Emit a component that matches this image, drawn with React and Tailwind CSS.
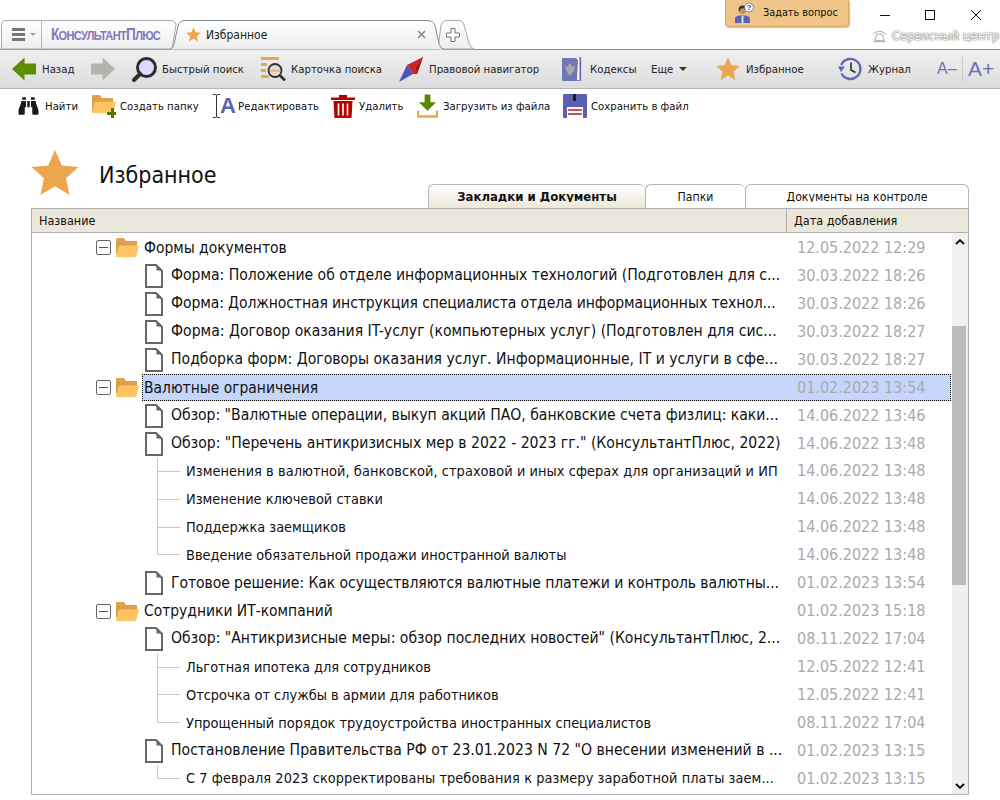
import React from 'react';
import { FaBinoculars } from 'react-icons/fa';

const rows = [
  { type: 'folder', text: 'Формы документов', date: '12.05.2022 12:29' },
  { type: 'doc', text: 'Форма: Положение об отделе информационных технологий (Подготовлен для с...', date: '30.03.2022 18:26', track: 'tracking-[-0.04px]' },
  { type: 'doc', text: 'Форма: Должностная инструкция специалиста отдела информационных технол...', date: '30.03.2022 18:26', track: 'tracking-[-0.12px]' },
  { type: 'doc', text: 'Форма: Договор оказания IT-услуг (компьютерных услуг) (Подготовлен для сис...', date: '30.03.2022 18:27' },
  { type: 'doc', text: 'Подборка форм: Договоры оказания услуг. Информационные, IT и услуги в сфе...', date: '30.03.2022 18:27' },
  { type: 'folder', text: 'Валютные ограничения', date: '01.02.2023 13:54', selected: true },
  { type: 'doc', text: 'Обзор: "Валютные операции, выкуп акций ПАО, банковские счета физлиц: каки...', date: '14.06.2022 13:46', track: 'tracking-[-0.03px]' },
  { type: 'doc', text: 'Обзор: "Перечень антикризисных мер в 2022 - 2023 гг." (КонсультантПлюс, 2022)', date: '14.06.2022 13:48' },
  { type: 'sub', text: 'Изменения в валютной, банковской, страховой и иных сферах для организаций и ИП', date: '14.06.2022 13:48', track: 'tracking-[0.06px]' },
  { type: 'sub', text: 'Изменение ключевой ставки', date: '14.06.2022 13:48' },
  { type: 'sub', text: 'Поддержка заемщиков', date: '14.06.2022 13:48' },
  { type: 'sub', text: 'Введение обязательной продажи иностранной валюты', date: '14.06.2022 13:48', last: true },
  { type: 'doc', text: 'Готовое решение: Как осуществляются валютные платежи и контроль валютны...', date: '01.02.2023 13:54', track: 'tracking-[-0.09px]' },
  { type: 'folder', text: 'Сотрудники ИТ-компаний', date: '01.02.2023 15:18' },
  { type: 'doc', text: 'Обзор: "Антикризисные меры: обзор последних новостей" (КонсультантПлюс, 2...', date: '08.11.2022 17:04' },
  { type: 'sub', text: 'Льготная ипотека для сотрудников', date: '12.05.2022 12:41' },
  { type: 'sub', text: 'Отсрочка от службы в армии для работников', date: '12.05.2022 12:41' },
  { type: 'sub', text: 'Упрощенный порядок трудоустройства иностранных специалистов', date: '08.11.2022 17:04', last: true },
  { type: 'doc', text: 'Постановление Правительства РФ от 23.01.2023 N 72 "О внесении изменений в ...', date: '01.02.2023 13:15' },
  { type: 'sub', text: 'С 7 февраля 2023 скорректированы требования к размеру заработной платы заем...', date: '01.02.2023 13:15', last: true, track: 'tracking-[0.07px]' },
];

const STAR = '12,0.5 15.4,8.2 23.8,9 17.5,14.6 19.3,23 12,18.6 4.7,23 6.5,14.6 0.2,9 8.6,8.2';

function Star({ className }) {
  return (
    <svg viewBox="0 0 24 24" className={className}>
      <polygon points={STAR} fill="#eda64d" />
    </svg>
  );
}

function TabShapes() {
  return (
    <svg width="480" height="31" viewBox="0 0 480 31" className="absolute left-0 top-[19px]">
      <defs>
        <linearGradient id="tabg" x1="0" y1="0" x2="0" y2="1">
          <stop offset="0" stopColor="#ffffff" />
          <stop offset="1" stopColor="#eeeeee" />
        </linearGradient>
      </defs>
      <path d="M438 30 L441 6 Q442 1.5 447 1.5 L458 1.5 Q463 1.5 464 6 L469 24 Q470.5 29 474 30 Z" fill="url(#tabg)" stroke="#a3abb3" />
      <path d="M1.5 30 L1.5 6 Q1.5 1.5 6 1.5 L170 1.5 Q176 1.5 176 6 L172 30 Z" fill="url(#tabg)" stroke="#a3abb3" />
      <line x1="41.5" y1="2" x2="41.5" y2="30" stroke="#b5bbc0" />
      <path d="M170 30.5 Q173 29.5 174 25 L178 7 Q179.5 1.5 185 1.5 L428 1.5 Q433 1.5 435 6 L439 25 Q440.5 29.5 444 30.5" fill="url(#tabg)" stroke="#838c94" />
    </svg>
  );
}

function AskIcon() {
  return (
    <svg viewBox="0 0 20 22" className="w-[20px] h-[22px] shrink-0">
      <path d="M1 21 V17 Q1 14 5 13.5 L12 13.5 Q16 14 16 17 V21 Z" fill="#5d63b4" />
      <rect x="7.6" y="14" width="1.8" height="7" fill="#e8e8f4" />
      <circle cx="8.5" cy="8.5" r="3.6" fill="#c98f63" />
      <path d="M4.6 8.5 Q4.5 3.6 8.5 3.6 Q12 3.6 12.4 7 Q9 5.6 6.5 7 L5.5 9.5 Z" fill="#333" />
      <circle cx="15" cy="5.5" r="4.4" fill="#fff" stroke="#5d63b4" strokeWidth="0.8" />
      <text x="15" y="8.3" textAnchor="middle" fontSize="7.5" fontWeight="700" fill="#444" fontFamily="Liberation Sans">?</text>
    </svg>
  );
}

function ToolIcon({ name }) {
  if (name === 'back') {
    return (
      <svg viewBox="0 0 24 24" className="w-[24px] h-[24px] shrink-0">
        <path d="M0 12 L12.5 0.5 V6.5 H24 V17.5 H12.5 V23.5 Z" fill="#5c8c00" />
      </svg>
    );
  }
  if (name === 'forward') {
    return (
      <svg viewBox="0 0 24 24" className="w-[24px] h-[24px] shrink-0">
        <path d="M24 12 L11.5 0.5 V6.5 H0 V17.5 H11.5 V23.5 Z" fill="#b4b3ae" />
      </svg>
    );
  }
  if (name === 'search') {
    return (
      <svg viewBox="0 0 25 25" className="w-[25px] h-[25px] shrink-0">
        <circle cx="14.5" cy="10.5" r="9" fill="#dcdcff" stroke="#2e2e2e" strokeWidth="3" />
        <path d="M8 17 L2 23" stroke="#2e2e2e" strokeWidth="4" strokeLinecap="round" />
      </svg>
    );
  }
  if (name === 'card') {
    return (
      <svg viewBox="0 0 25 24" className="w-[25px] h-[24px] shrink-0">
        <path d="M0 1.5 H18 M0 7.5 H6 M0 13.5 H5 M0 19.5 H8" stroke="#eba64c" strokeWidth="3" />
        <circle cx="14" cy="13.5" r="6.5" fill="#e4dcdc" stroke="#2e2e2e" strokeWidth="1.8" />
        <path d="M9 12.5 H19 V15 H9 Z" fill="#eba64c" opacity="0.6" />
        <path d="M19 18.5 L24 23.5" stroke="#2e2e2e" strokeWidth="2.6" />
      </svg>
    );
  }
  if (name === 'nav') {
    return (
      <svg viewBox="0 0 24 25" className="w-[24px] h-[25px] shrink-0">
        <path d="M0 25 L8 8 L14 17 Z" fill="#4a55b8" />
        <path d="M8 8 L24 0 L18 17 L14 17 Z" fill="#c9262c" />
        <path d="M24 0 L17 11 L18 17 Z" fill="#8f1c20" />
      </svg>
    );
  }
  if (name === 'codex') {
    return (
      <svg viewBox="0 0 20 24" className="w-[20px] h-[24px] shrink-0">
        <rect x="0" y="1" width="17" height="23" rx="1" fill="#6f75b9" />
        <path d="M14 1 H19 V23 H15 L16 3 Z" fill="#fff" />
        <rect x="17.5" y="0" width="1.6" height="24" fill="#5c62ab" />
        <path d="M3 8 L5 10 L8 6 L11 10 L13 8 L12 14 L8 19 L4 14 Z" fill="#a8a4aa" />
      </svg>
    );
  }
  if (name === 'star') return <Star className="w-[24px] h-[24px] shrink-0" />;
  if (name === 'clock') {
    return (
      <svg viewBox="0 0 24 24" className="w-[24px] h-[24px] shrink-0">
        <path d="M3.2 8 A10 10 0 1 1 3.5 16.5" fill="none" stroke="#6167b6" strokeWidth="2.4" />
        <path d="M0 9.5 L7 9.5 L3 15 Z" fill="#6167b6" />
        <path d="M13 5.5 V13 L17.5 15.5" fill="none" stroke="#2a2a2a" strokeWidth="1.6" />
      </svg>
    );
  }
  if (name === 'find') return <FaBinoculars className="w-[21px] h-[20px] shrink-0 text-[#1a1a1a]" />;
  if (name === 'folderAdd') {
    return (
      <svg viewBox="0 0 24 24" className="w-[24px] h-[24px] shrink-0">
        <path d="M0 2 Q0 1 1 1 H8 L10 4 H21 V19 H0 Z" fill="#dca24f" />
        <path d="M0 19 L3 8 H24 L21 19 Z" fill="#fdc562" />
        <path d="M15 18 H19 V14 H22 V18 H24 V21 H22 V24 H19 V21 H15 Z" fill="#4f7c00" />
      </svg>
    );
  }
  if (name === 'edit') {
    return (
      <span className="flex items-center w-[21px] h-[24px] shrink-0">
        <svg viewBox="0 0 9 24" className="w-[9px] h-[24px] shrink-0">
          <path d="M1 0.5 H3.5 Q4.5 0.5 4.5 2 V22 Q4.5 23.5 3.5 23.5 H1 M8 0.5 H5.5 Q4.5 0.5 4.5 2 M4.5 22 Q4.5 23.5 5.5 23.5 H8" fill="none" stroke="#333" />
        </svg>
        <span className="ml-[-1px] text-[22px] font-bold leading-none text-[#5d62b4] [font-family:'Liberation_Sans',sans-serif]">A</span>
      </span>
    );
  }
  if (name === 'trash') {
    return (
      <svg viewBox="0 0 24 24" className="w-[24px] h-[24px] shrink-0">
        <path d="M0 3.5 H24 V6 H0 Z M8 1 H16 V3.5 H8 Z" fill="#b90000" />
        <path d="M2.5 7 H21.5 L20.5 24 H3.5 Z" fill="#b90000" />
        <path d="M7.5 9.5 V21.5 M12 9.5 V21.5 M16.5 9.5 V21.5" stroke="#fff" strokeWidth="1.6" />
      </svg>
    );
  }
  if (name === 'download') {
    return (
      <svg viewBox="0 0 22 24" className="w-[21px] h-[24px] shrink-0">
        <path d="M8 0 H14 V8 H20 L11 17 L2 8 H8 Z" fill="#5a8600" />
        <path d="M1 17 V23 H21 V17" fill="none" stroke="#eba64c" strokeWidth="2.4" />
      </svg>
    );
  }
  return (
    <svg viewBox="0 0 24 24" className="w-[24px] h-[24px] shrink-0">
      <path d="M1 0 H23 Q24 0 24 1 V23 Q24 24 23 24 H1 Q0 24 0 23 V1 Q0 0 1 0 Z" fill="#5d5fb0" />
      <rect x="10" y="0" width="3" height="7" fill="#1e1e1e" />
      <rect x="4" y="13" width="16" height="11" fill="#fff" />
      <path d="M5 16 H19 M5 20 H19" stroke="#b41a24" strokeWidth="1.5" />
    </svg>
  );
}

function Tool({ icon, label, className }) {
  return (
    <div className={`flex items-center shrink-0 ${className}`}>
      <ToolIcon name={icon} />
      {label && <span className="whitespace-nowrap pt-[2px]">{label}</span>}
    </div>
  );
}

function Connector({ last }) {
  if (last) return <div className="w-[23px] h-1/2 self-start border-l border-b border-[#c8c8c8]" />;
  return (
    <div className="w-[23px] h-full flex items-center border-l border-[#c8c8c8]">
      <div className="w-full h-px bg-[#c8c8c8]" />
    </div>
  );
}

function Row({ row }) {
  let nameClass = 'text-[15.6px]';
  if (row.type === 'sub') nameClass = 'text-[14.4px] pt-[1px]';
  if (row.type === 'folder') nameClass = row.selected ? 'text-[15.45px] pl-[1px] pt-[1px]' : 'text-[15.45px] pl-[2px] pt-[1px]';
  return (
    <div className="h-[27.95px] flex items-center">
      {row.type === 'folder' && (
        <div className="flex items-center w-[110px] pl-[64px] shrink-0">
          <div className="w-[15px] h-[15px] flex items-center justify-center rounded-[2px] border border-[#666]">
            <div className="w-[9px] h-px bg-[#555]" />
          </div>
          <svg viewBox="0 0 23 19" className="w-[23px] h-[19px] ml-[5px] shrink-0">
            <path d="M0 1.5 Q0 0 1.5 0 H8 L10 3 H21 V16 H0 Z" fill="#dfa04d" />
            <path d="M0 19 L3 7.5 H23 L20 19 Z" fill="#fdc562" />
          </svg>
        </div>
      )}
      {row.type === 'doc' && (
        <div className="w-[139px] pl-[113px] shrink-0">
          <svg viewBox="0 0 18 24" className="w-[18px] h-[24px]">
            <path d="M1 1 H11 L17 7 V23 H1 Z" fill="#fff" stroke="#666" strokeWidth="2" />
            <path d="M11.5 0.5 L17.5 6.5 H11.5 Z" fill="#666" />
          </svg>
        </div>
      )}
      {row.type === 'sub' && (
        <div className="flex items-center h-full w-[154px] pl-[125px] shrink-0">
          <Connector last={row.last} />
        </div>
      )}
      <div className={`flex-1 min-w-0 flex items-center h-[27px] ${row.selected ? 'mr-[1px] border border-dotted border-black bg-[#c6d6fb]' : ''}`}>
        <div className={`flex-1 min-w-0 whitespace-nowrap overflow-hidden text-[#111] ${nameClass} ${row.track || ''}`}>
          {row.text}
        </div>
        <div className={`shrink-0 text-[16px] text-[#aaaaaa] whitespace-nowrap ${row.selected ? 'w-[153px]' : 'w-[155px]'}`}>{row.date}</div>
      </div>
    </div>
  );
}

export default function App() {
  return (
    <div className="w-[1000px] h-[800px] overflow-hidden bg-white flex flex-col text-[#222] [font-family:'DejaVu_Sans_Condensed','DejaVu_Sans',sans-serif]">
      {/* Title bar with browser-like tabs */}
      <div className="relative z-10 h-[49px] shrink-0 flex">
        <TabShapes />
        <div className="relative w-[725px] h-full pt-[20px] flex items-center">
          <div className="w-[41px] pl-[12px] flex items-center shrink-0">
            <div className="w-[13px] flex flex-col gap-[2.5px]">
              <div className="h-[2.5px] bg-[#777]" />
              <div className="h-[2.5px] bg-[#777]" />
              <div className="h-[2.5px] bg-[#777]" />
            </div>
            <div className="ml-[5px] w-0 h-0 border-x-[3px] border-x-transparent border-t-[3px] border-t-[#999]" />
          </div>
          <div className="w-[137px] pl-[10px] shrink-0 whitespace-nowrap">
            <div className="flex items-baseline origin-left scale-x-[0.85] font-bold tracking-[-0.8px] text-[#8079bb] [font-family:'Liberation_Sans',sans-serif]">
              <span className="text-[16px]">К</span>
              <span className="text-[13px]">ОНСУЛЬТАНТ</span>
              <span className="text-[16px]">П</span>
              <span className="text-[13px]">ЛЮС</span>
            </div>
          </div>
          <Star className="w-[15px] h-[15px] ml-[8px] shrink-0" />
          <span className="ml-[5px] pt-[1px] text-[12px] whitespace-nowrap">Избранное</span>
          <svg viewBox="0 0 9 9" className="w-[9px] h-[9px] ml-[150px] shrink-0">
            <path d="M1 1 L8 8 M8 1 L1 8" stroke="#888" strokeWidth="1.6" />
          </svg>
          <svg viewBox="0 0 14 14" className="w-[14px] h-[14px] ml-[20px] shrink-0">
            <path d="M5 0.5 H9 V5 H13.5 V9 H9 V13.5 H5 V9 H0.5 V5 H5 Z" fill="#fff" stroke="#777" />
          </svg>
        </div>
        <div className="w-[124px] h-[27px] shrink-0 flex items-center gap-[9px] pl-[8px] rounded-b-[4px] bg-[#eec587] border-x border-b border-[#d9aa63] shadow-[1px_1px_2px_#bbb] text-[10.8px] text-[#111]">
          <AskIcon />
          <span className="whitespace-nowrap">Задать вопрос</span>
        </div>
        <div className="flex-1 min-w-0 overflow-hidden flex flex-col">
          <div className="h-[26px] pt-[4px] flex items-center pl-[31px]">
            <div className="w-[10px] h-px bg-[#111]" />
            <div className="ml-[35px] w-[10px] h-[10px] border border-[#111]" />
            <svg viewBox="0 0 12 12" className="w-[12px] h-[12px] ml-[35px] shrink-0">
              <path d="M1 1 L11 11 M11 1 L1 11" stroke="#111" strokeWidth="1" />
            </svg>
          </div>
          <div className="flex items-center pl-[23px] gap-[5px] text-[12.8px] text-[#f4f4f4] whitespace-nowrap [text-shadow:0_0_2px_#666,0_0_1px_#888]">
            <svg viewBox="0 0 16 14" className="w-[15px] h-[14px] shrink-0">
              <path d="M1 5 Q8 -1 15 5 M2 13 H14 M5 5 H11 L13 12 H3 Z" fill="none" stroke="#a5a5a5" />
            </svg>
            <span>Сервисный центр</span>
          </div>
        </div>
      </div>

      {/* Main toolbar */}
      <div className="h-[40px] shrink-0 flex items-center border-t border-b border-t-[#868e96] border-b-[#b4b4b4] bg-gradient-to-b from-[#f0f0f0] to-[#dcdcdc] text-[11.3px]">
        <Tool icon="back" label="Назад" className="ml-[12px] gap-[6px] w-[79px]" />
        <Tool icon="forward" className="w-[41px]" />
        <Tool icon="search" label="Быстрый поиск" className="gap-[5px] w-[129px]" />
        <Tool icon="card" label="Карточка поиска" className="gap-[5px] w-[138px]" />
        <Tool icon="nav" label="Правовой навигатор" className="gap-[6px] w-[163px]" />
        <Tool icon="codex" label="Кодексы" className="gap-[8px] w-[89px]" />
        <div className="w-[65px] shrink-0 flex items-center gap-[6px]">
          <span className="pt-[2px]">Еще</span>
          <div className="w-0 h-0 border-x-[4px] border-x-transparent border-t-[4px] border-t-[#333]" />
        </div>
        <Tool icon="star" label="Избранное" className="gap-[6px] w-[122px]" />
        <Tool icon="clock" label="Журнал" className="gap-[6px] w-[99px]" />
        <span className="w-[25px] shrink-0 text-[16px] text-[#6d72b6] whitespace-nowrap [font-family:'Liberation_Sans',sans-serif]">A–</span>
        <div className="w-px h-[24px] bg-[#c8c8c8]" />
        <span className="ml-[5px] text-[21px] text-[#6d72b6] whitespace-nowrap [font-family:'Liberation_Sans',sans-serif]">A+</span>
      </div>

      {/* Action toolbar */}
      <div className="h-[34px] shrink-0 flex items-center text-[11.3px] text-[#111]">
        <Tool icon="find" label="Найти" className="ml-[18px] gap-[6px] w-[74px]" />
        <Tool icon="folderAdd" label="Создать папку" className="gap-[4px] w-[120px]" />
        <Tool icon="edit" label="Редактировать" className="gap-[5px] w-[119px]" />
        <Tool icon="trash" label="Удалить" className="gap-[4px] w-[86px]" />
        <Tool icon="download" label="Загрузить из файла" className="gap-[5px] w-[146px]" />
        <Tool icon="save" label="Сохранить в файл" className="gap-[4px]" />
      </div>

      {/* Title and tabs */}
      <div className="h-[85px] shrink-0 flex justify-between px-[31px]">
        <div className="flex items-center self-start mt-[26px] gap-[20px]">
          <Star className="w-[48px] h-[48px]" />
          <span className="pt-[4px] text-[23px] text-[#111] whitespace-nowrap">Избранное</span>
        </div>
        <div className="self-end flex h-[24px] text-[#111]">
          <div className="w-[217px] h-[24px] text-center text-[13px] font-bold rounded-t-[6px] border-l border-t border-[#b5b5b5] bg-gradient-to-b from-white to-[#ebe7da]">
            <div className="h-[17px] overflow-hidden leading-[24px]">Закладки и Документы</div>
          </div>
          <div className="w-[100px] h-[24px] text-center text-[12.2px] rounded-t-[6px] border-l border-t border-[#b5b5b5]">
            <div className="h-[17px] overflow-hidden leading-[24px]">Папки</div>
          </div>
          <div className="w-[224px] h-[24px] text-center text-[12.2px] rounded-t-[6px] border-x border-t border-[#b5b5b5]">
            <div className="h-[17px] overflow-hidden leading-[24px]">Документы на контроле</div>
          </div>
        </div>
      </div>

      {/* Table */}
      <div className="mx-[31px] h-[587px] shrink-0 flex flex-col border border-[#b0b0b0]">
        <div className="h-[24px] shrink-0 flex items-center bg-[#ebe7da] border-b border-[#b0b0b0] text-[12.5px] text-[#111]">
          <div className="w-[755px] h-full flex items-center pl-[7px] pt-[1px] border-r border-[#b0b0b0]">Название</div>
          <div className="pl-[7px] pt-[1px]">Дата добавления</div>
        </div>
        <div className="flex-1 min-h-0 flex">
          <div className="w-[920px] shrink-0 overflow-hidden pt-[1px]">
            {rows.map((row, i) => (
              <Row key={i} row={row} />
            ))}
          </div>
          <div className="flex-1 flex flex-col bg-[#efefef]">
            <div className="h-[93px] shrink-0 flex justify-center items-start pt-[6px] bg-[#f0f0f0]">
              <svg viewBox="0 0 10 6" className="w-[10px] h-[6px]">
                <path d="M1 5 L5 1.2 L9 5" fill="none" stroke="#000" strokeWidth="1.8" />
              </svg>
            </div>
            <div className="w-[14px] h-[259px] shrink-0 bg-[#bcbcbc]" />
            <div className="flex-1 flex justify-center items-end pb-[5px]">
              <svg viewBox="0 0 10 6" className="w-[10px] h-[6px]">
                <path d="M1 1 L5 4.8 L9 1" fill="none" stroke="#000" strokeWidth="1.8" />
              </svg>
            </div>
          </div>
        </div>
      </div>
    </div>
  );
}
